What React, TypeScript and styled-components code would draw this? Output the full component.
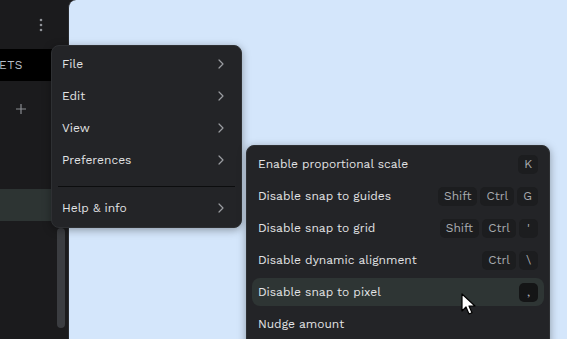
import React from 'react'
import styled, { createGlobalStyle } from 'styled-components'

const GlobalStyle = createGlobalStyle`
  html, body {
    margin: 0;
    padding: 0;
    background: #1b1b1d;
    font-family: 'Work Sans', Inter, 'Noto Sans', sans-serif;
    overflow: hidden;
  }
`

interface Shortcut {
  label: string
  keys: string[]
  hovered?: boolean
}

const mainItems = ['File', 'Edit', 'View', 'Preferences']

const prefItems: Shortcut[] = [
  { label: 'Enable proportional scale', keys: ['K'] },
  { label: 'Disable snap to guides', keys: ['Shift', 'Ctrl', 'G'] },
  { label: 'Disable snap to grid', keys: ['Shift', 'Ctrl', "'"] },
  { label: 'Disable dynamic alignment', keys: ['Ctrl', '\\'] },
  { label: 'Disable snap to pixel', keys: [','], hovered: true },
  { label: 'Nudge amount', keys: [] },
]

const Chevron = () => (
  <svg width="8" height="10" viewBox="0 0 8 10" fill="none">
    <path d="M2 1l4 4-4 4" stroke="#9a9ca0" strokeWidth="1.2" strokeLinecap="round" strokeLinejoin="round" />
  </svg>
)

const Cursor = () => (
  <svg width="16" height="24" viewBox="0 0 16 24">
    <path
      d="M1 1v17l4-4 3 7 3-1.3-3-6.7h6z"
      fill="#fff"
      stroke="#000"
      strokeWidth="1.2"
      strokeLinejoin="round"
    />
  </svg>
)

const App: React.FC = () => (
  <>
    <GlobalStyle />
    <Screen>
      <Sidebar>
        <SideTop>
          <svg width="4" height="14" viewBox="0 0 4 14">
            <circle cx="2" cy="2" r="1.3" fill="#8f9297" />
            <circle cx="2" cy="7" r="1.3" fill="#8f9297" />
            <circle cx="2" cy="12" r="1.3" fill="#8f9297" />
          </svg>
        </SideTop>
        <Tabs>ETS</Tabs>
        <SideBody>
          <SideContent>
            <AddRow>
              <svg width="12" height="12" viewBox="0 0 12 12">
                <path d="M6 1v10M1 6h10" stroke="#8a8d92" strokeWidth="1.2" />
              </svg>
            </AddRow>
            <SelectedRow />
          </SideContent>
          <Scrollbar />
        </SideBody>
      </Sidebar>
      <Canvas />

      <MainMenu>
        {mainItems.map((item) => (
          <MainItem key={item}>
            <span>{item}</span>
            <Chevron />
          </MainItem>
        ))}
        <Separator />
        <MainItem>
          <span>Help &amp; info</span>
          <Chevron />
        </MainItem>
      </MainMenu>

      <SubMenu>
        {prefItems.map((item) => (
          <MenuItem key={item.label} $hovered={item.hovered}>
            <span>{item.label}</span>
            <Keys>
              {item.keys.map((k) => (
                <Key key={k} $dark={item.hovered}>
                  {k}
                </Key>
              ))}
            </Keys>
          </MenuItem>
        ))}
      </SubMenu>

      <CursorSpot>
        <Cursor />
      </CursorSpot>
    </Screen>
  </>
)

const Screen = styled.div`
  position: relative;
  display: flex;
  width: 567px;
  height: 339px;
  overflow: hidden;
  background: #1b1b1d;
`

const Sidebar = styled.div`
  width: 68px;
  display: flex;
  flex-direction: column;
  background: #1b1b1d;
`

const SideTop = styled.div`
  height: 49px;
  display: flex;
  align-items: center;
  padding-left: 39px;
  box-sizing: border-box;
`

const Tabs = styled.div`
  height: 32px;
  background: #000;
  display: flex;
  align-items: center;
  margin-right: 10px;
  color: #b4bcc6;
  font-size: 12px;
  letter-spacing: 0.6px;
  margin-left: -1px;
`

const SideBody = styled.div`
  flex: 1;
  display: flex;
`

const SideContent = styled.div`
  width: 57px;
  display: flex;
  flex-direction: column;
`

const AddRow = styled.div`
  height: 56px;
  display: flex;
  align-items: center;
  padding-left: 15px;
  padding-bottom: 1px;
  box-sizing: border-box;
`

const SelectedRow = styled.div`
  margin-top: 52px;
  height: 32px;
  background: #2d3433;
  width: 68px;
`

const Scrollbar = styled.div`
  align-self: flex-end;
  margin-bottom: 11px;
  width: 8px;
  height: 100px;
  border-radius: 4px;
  background: #3b3d41;
`

const Canvas = styled.div`
  flex: 1;
  background: #d4e6fb;
  border-top-left-radius: 8px;
  border-left: 1px solid #2a2b2e;
`

const Menu = styled.div`
  position: absolute;
  display: flex;
  flex-direction: column;
  gap: 4px;
  padding: 4px 5px;
  box-sizing: border-box;
  background: #232427;
  border: 1px solid #2e3033;
  border-radius: 8px;
  box-shadow: 0 2px 8px rgba(0, 0, 0, 0.35);
  color: #e2e3e5;
  font-size: 12px;
`

const MainMenu = styled(Menu)`
  left: 51px;
  top: 45px;
  width: 191px;
  height: 183px;
  padding: 4px 4px;
`

const SubMenu = styled(Menu)`
  left: 246px;
  top: 145px;
  width: 304px;
  height: 210px;
`

const MenuItem = styled.div<{ $hovered?: boolean }>`
  height: 28px;
  flex-shrink: 0;
  display: flex;
  align-items: center;
  justify-content: space-between;
  padding: 0 6px;
  border-radius: 8px;
  background: ${(p) => (p.$hovered ? '#2e3534' : 'transparent')};
  white-space: nowrap;
`

const MainItem = styled(MenuItem)`
  padding-right: 12px;
`

const Separator = styled.div`
  flex-shrink: 0;
  height: 1px;
  background: #0c0d0e;
  margin: 8px 2px 3px;
`

const Keys = styled.div`
  display: flex;
  gap: 3px;
`

const Key = styled.span<{ $dark?: boolean }>`
  height: 19px;
  min-width: 19px;
  padding: 0 6px;
  box-sizing: border-box;
  display: flex;
  align-items: center;
  justify-content: center;
  border-radius: 5px;
  background: ${(p) => (p.$dark ? '#141516' : '#1c1d1f')};
  color: #a9abaf;
  font-size: 12px;
`

const CursorSpot = styled.div`
  position: absolute;
  left: 461px;
  top: 293px;
`

export default App
